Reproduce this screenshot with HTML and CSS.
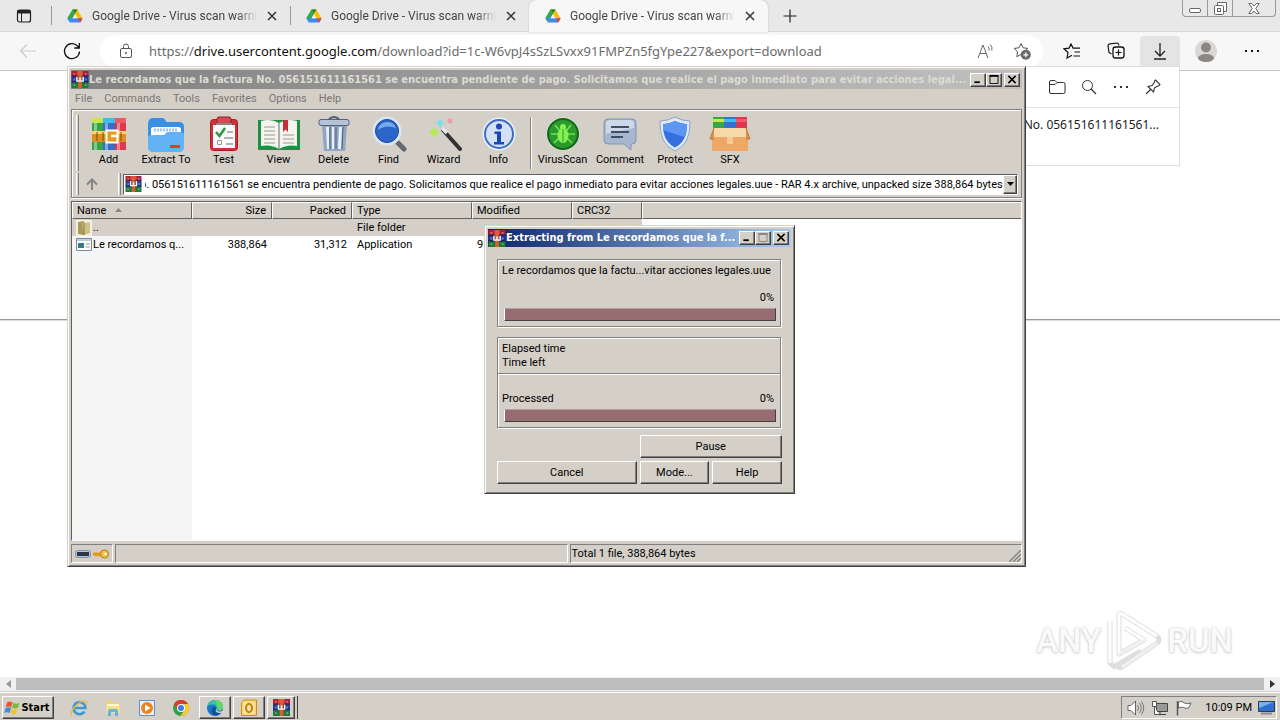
FILE: index.html
```html
<!DOCTYPE html>
<html lang="en">
<head>
<meta charset="utf-8">
<title>Google Drive - Virus scan warning</title>
<link rel="stylesheet" href="styles.css">
</head>
<body>
<svg class="defs" aria-hidden="true">
  <symbol id="drive" viewBox="0 0 16 16">
    <path d="M5.6 1.500h4.800L5.200 10.500.4 10.200z" fill="#34a853"/>
    <path d="M5.600 1.500h4.800l5.200 9h-4.900z" fill="#fbbc04"/>
    <path d="M5.600 1.500h4.800L8 5.600z" fill="#188038"/>
    <path d="M5.300 10.300h10.300l-2.400 4.200H2.800z" fill="#4285f4"/>
    <path d="M10.700 10.400h4.900l-2.400 4.100z" fill="#ea4335"/>
    <path d="M.4 10.200 5.600 1.500l2.400 4.100-4.600 8z" fill="#34a853"/>
    <path d="M.4 10.500h4.800L2.800 14.500z" fill="#4285f4"/>
    <path d="M8 6.400l2.300 3.900H5.700z" fill="#f4f4f4"/>
  </symbol>
  <symbol id="rar" viewBox="0 0 18 18">
    <path d="M0 0h6v6H0z" fill="#b5202c"/><path d="M6 0h6v6H6z" fill="#d8484a"/><path d="M12 0h6v6h-6z" fill="#a41e46"/>
    <path d="M0 6h18v6H0z" fill="#24389c"/><path d="M0 12h18v6H0z" fill="#1c7a3c"/>
    <path d="M0 5.500h18M0 11.500h18" stroke="#161a3c"/>
    <path d="M2 2h2v2H2zM2 8h2v2H2zM2 14h2v2H2zM14 2h2v2h-2zM14 8h2v2h-2zM14 14h2v2h-2z" fill="#fff" opacity=".35"/>
    <path d="M7 0h4v18H7z" fill="#d8602c"/>
    <path d="M5 6h1.500v4H5zM8.300 7h1.500v3H8.300zM11.600 6h1.500v4h-1.500zM5 10h8.100v1.500H5z" fill="#fff"/>
  </symbol>
  <symbol id="close" viewBox="0 0 10 10"><path d="M1 1l8 8M9 1l-8 8" stroke="#333" stroke-width="1.500"/></symbol>
  <symbol id="w-min" viewBox="0 0 10 10"><path d="M1 8h6" stroke="#000" stroke-width="2"/></symbol>
  <symbol id="w-max" viewBox="0 0 10 10"><path d="M.5 1v8.500h9V1" fill="none" stroke="currentColor"/><path d="M0 1h10" stroke="currentColor" stroke-width="2"/></symbol>
  <symbol id="w-close" viewBox="0 0 10 10"><path d="M1 1l8 8M9 1l-8 8" stroke="#000" stroke-width="1.700"/></symbol>
</svg>

<header class="browser">
  <div class="tabstrip">
    <button class="tabmenu" aria-label="Tab actions"><svg width="16" height="16" viewBox="0 0 16 16"><rect x="1.500" y="2" width="13" height="12" rx="2" fill="none" stroke="#222" stroke-width="1.200"/><path d="M1.500 4.500h13M1.500 3h13" stroke="#222" stroke-width="2"/><path d="M5.500 5v9" stroke="#222"/></svg></button>
    <div class="tab"><svg class="fav"><use href="#drive"/></svg><span class="tabtitle">Google Drive - Virus scan warni</span><button class="tabclose" aria-label="Close tab"><svg><use href="#close"/></svg></button></div>
    <div class="tab"><svg class="fav"><use href="#drive"/></svg><span class="tabtitle">Google Drive - Virus scan warni</span><button class="tabclose" aria-label="Close tab"><svg><use href="#close"/></svg></button></div>
    <div class="tab active"><svg class="fav"><use href="#drive"/></svg><span class="tabtitle">Google Drive - Virus scan warni</span><button class="tabclose" aria-label="Close tab"><svg><use href="#close"/></svg></button></div>
    <button class="newtab" aria-label="New tab"><svg width="14" height="14" viewBox="0 0 14 14"><path d="M7 .5v13M.5 7h13" stroke="#222" stroke-width="1.200"/></svg></button>
    <div class="wincontrols">
      <button aria-label="Minimize"><svg width="13" height="12" viewBox="0 0 13 12"><rect x=".5" y="6.500" width="11" height="4" rx="1.500" fill="#fff" stroke="#666"/></svg></button>
      <button aria-label="Restore"><svg width="13" height="13" viewBox="0 0 13 13"><path d="M3.500 3V.5h9v9H10" fill="#fff" stroke="#666"/><rect x=".5" y="3.500" width="9" height="9" rx="1" fill="#fff" stroke="#666"/><rect x="3.500" y="6.500" width="3" height="3" fill="none" stroke="#666"/></svg></button>
      <button class="wide" aria-label="Close"><svg width="12" height="11" viewBox="0 0 12 11"><path d="M.8.5h3L6 3 8.200.5h3L7.800 5.500l3.400 5h-3L6 8l-2.200 2.500h-3l3.400-5z" fill="#fff" stroke="#666"/></svg></button>
    </div>
  </div>
  <div class="toolbar">
    <button class="back" aria-label="Back"><svg width="18" height="16" viewBox="0 0 18 16"><path d="M17 8H1.500M8 1.500 1.500 8 8 14.500" fill="none" stroke="#ccc" stroke-width="1.200"/></svg></button>
    <button class="reload" aria-label="Refresh"><svg width="18" height="18" viewBox="0 0 18 18"><path d="M16.500 9.500A7.500 7.500 0 1 1 14.500 4L16 5.500M16.300 1v5h-5" fill="none" stroke="#111" stroke-width="1.300"/></svg></button>
    <div class="address">
      <svg width="14" height="16" viewBox="0 0 14 16"><rect x="1.500" y="5.500" width="11" height="9" rx="1.500" fill="none" stroke="#555"/><path d="M4.500 5.500V3.500a2.500 2.500 0 0 1 5 0v2" fill="none" stroke="#555"/><circle cx="7" cy="10" r="1" fill="#555"/></svg>
      <div class="url" role="textbox" contenteditable="true" aria-label="Address" spellcheck="false">https://<b>drive.usercontent.google.com</b>/download?id=1c-W6vpJ4sSzLSvxx91FMPZn5fgYpe227&amp;export=download</div>
      <button aria-label="Read aloud"><svg width="18" height="16" viewBox="0 0 18 16"><path d="M1 15 6 2l5 13M3 10.500h6M11 3.500q1.500 1.500 1 4M13 1.500q3 2.500 1.800 6" fill="none" stroke="#666"/></svg></button>
      <button aria-label="Add to favorites"><svg width="18" height="18" viewBox="0 0 18 18"><path d="M8 1.500l2 4.300 4.800.6-3.500 3.300L8 12.500 3.800 14.700 4.600 9.800 1.200 6.400 6 5.800z" fill="none" stroke="#555"/><circle cx="12.800" cy="12.800" r="5" fill="#666"/><path d="M12.800 10.300v5M10.300 12.800h5" stroke="#fff" stroke-width="1.200"/></svg></button>
    </div>
    <nav class="tools">
      <button aria-label="Favorites"><svg width="18" height="16" viewBox="0 0 18 16"><path d="M9 12.200 4 15l1-5.500L1 5.800l5-.7L8 1l2 4.100h7M11.500 9H17M10.500 13H17" fill="none" stroke="#111" stroke-width="1.200"/></svg></button>
      <button aria-label="Collections"><svg width="18" height="18" viewBox="0 0 18 18"><path d="M4.500 12 2 10.500 1 3.500Q1 2 3 1.800L10 1q1.500 0 2 2.500" fill="none" stroke="#111" stroke-width="1.200"/><rect x="6" y="5" width="11" height="11" rx="2.500" fill="none" stroke="#111" stroke-width="1.300"/><path d="M11.500 7.500v6M8.500 10.500h6" stroke="#111" stroke-width="1.200"/></svg></button>
      <button class="on" aria-label="Downloads"><svg width="14" height="17" viewBox="0 0 14 17"><path d="M7 0v13M2 8l5 5 5-5M1 16h12" fill="none" stroke="#222" stroke-width="1.300"/></svg></button>
      <button class="profile" aria-label="Profile"><svg width="24" height="24" viewBox="0 0 24 24"><circle cx="12" cy="12" r="11" fill="#dad7d4"/><circle cx="12" cy="8.500" r="5" fill="#8b8784"/><ellipse cx="12" cy="19" rx="8" ry="4" fill="#8b8784"/></svg></button>
      <button class="more" aria-label="Settings and more"><svg width="16" height="4" viewBox="0 0 16 4"><path d="M1 1h2v2H1zM7 1h2v2H7zM13 1h2v2h-2z" fill="#111"/></svg></button>
    </nav>
  </div>
</header>

<main class="page"><hr></main>

<div class="hscroll">
  <button aria-label="Scroll left"><svg width="5" height="8" viewBox="0 0 5 8"><path d="M5 0v8L0 4z" fill="#999"/></svg></button>
  <div class="thumb"></div>
  <button aria-label="Scroll right"><svg width="5" height="8" viewBox="0 0 5 8"><path d="M0 0v8l5-4z" fill="#333"/></svg></button>
</div>

<footer class="taskbar">
  <button class="raised start"><svg width="17" height="16" viewBox="0 0 17 16"><path d="M3 2.500q3-2 5.500 0L7.200 7.300q-2.500-1.600-5.500 0z" fill="#e8582a"/><path d="M9.300 2.800q3 1.800 6 0L14 7.700q-3 1.600-6 0z" fill="#7cb83c"/><path d="M1.500 8.200q3-2 5.500 0L5.700 13q-2.500-1.600-5.500 0z" fill="#3b8fd8"/><path d="M7.800 8.700q3 1.800 6 0l-1.300 4.900q-3 1.600-6 0z" fill="#f8c22c"/></svg>Start</button>
  <nav class="quick">
    <button aria-label="Internet Explorer"><svg width="18" height="18" viewBox="0 0 18 18"><path d="M14.500 12.500a6 6 0 1 1 1-3.500H4.500" fill="none" stroke="#3a9bdc" stroke-width="2.600"/><path d="M2 16.500Q-.5 14 5 7.500 12.500 0 16 2q1.500 1 0 4" fill="none" stroke="#e8b93a" stroke-width="1.300"/></svg></button>
    <button aria-label="Explorer"><svg width="18" height="18" viewBox="0 0 18 18"><path d="M2 2h5l1 2h8v10H2z" fill="#ecd372"/><path d="M3 5h12v3H3z" fill="#fff8cf"/><path d="M2 7h14v7H2z" fill="#f2df90"/><path d="M4 17v-5q0-2 2-2h6q2 0 2 2v5h-3v-4H7v4z" fill="#69b3dc"/></svg></button>
    <button aria-label="Media Player"><svg width="18" height="18" viewBox="0 0 18 18"><path d="M1.500 1.500h15v15h-15z" fill="#e8f1fa" stroke="#5a92c8"/><circle cx="9" cy="9" r="6" fill="#ef831c"/><path d="M7 5.500v7L12.500 9z" fill="#fff"/></svg></button>
    <button aria-label="Chrome"><svg width="18" height="18" viewBox="0 0 18 18"><circle cx="9" cy="9" r="8" fill="#34a048"/><path d="M2.100 5A8 8 0 0 1 15.900 5L9 5.500 5.500 11z" fill="#da3b2b"/><path d="M16 5a8 8 0 0 1-7.500 12L12.500 11 11 5z" fill="#f8ca30"/><circle cx="9" cy="9" r="4" fill="#fff"/><circle cx="9" cy="9" r="3" fill="#3d7de8"/></svg></button>
  </nav>
  <button class="raised task" aria-label="Edge"><svg width="18" height="18" viewBox="0 0 18 18"><circle cx="9" cy="9" r="8" fill="#1976c8"/><path d="M1.500 7Q3.500 1 9.500 1 16.500 1.500 17 7.500q0 4-4.500 4-3 0-2-2.500.5-3-3-3.500Q3.500 5 1.500 7z" fill="#3cc4a0"/><path d="M9 1q7 .5 8 6.500 0 4-4 4.200" fill="#66d868"/><path d="M10.500 9.500q-1 3.500 5 3-2.500 4.500-7 4-4-2-2.500-6.500Q8 6.500 10.500 9.500z" fill="#114f9e"/><path d="M10.500 9.300q-.6 2.900 3 3.200 2 0 3.500-1v2q-6 1.500-7.500-1.500z" fill="#d4d0c8"/></svg></button>
  <button class="raised task" aria-label="Outlook"><svg width="18" height="18" viewBox="0 0 18 18"><path d="M1.500 3.500 4 1h12.500v15.500h-15z" fill="#f7d778" stroke="#cf8f14"/><path d="M4 3.500h10v11H4z" fill="#fbe9ae"/><ellipse cx="9" cy="9" rx="3" ry="4.200" fill="none" stroke="#c98412" stroke-width="2.200"/></svg></button>
  <div class="stack"><button class="raised task" aria-label="WinRAR"><svg width="17" height="17"><use href="#rar"/></svg></button></div>
  <div class="tray">
    <svg width="18" height="16" viewBox="0 0 18 16"><path d="M1 5.500h3L8.500 1v14L4 10.500H1z" fill="#fff" stroke="#666"/><path d="M10.500 5q2 3 0 6M12.500 3q3.500 5 0 10M14.500 1.500q4.500 6.500 0 13" fill="none" stroke="#777"/></svg>
    <svg width="18" height="16" viewBox="0 0 18 16"><path d="M5.500 3.500h11v8h-11z" fill="#999" stroke="#444"/><path d="M9 12v2.500M6 14.500h9" stroke="#444"/><path d="M1.500 1.500h4v5h-4zM3.500 6.500v8h4" fill="#fff" stroke="#555"/></svg>
    <svg width="18" height="16" viewBox="0 0 18 16"><path d="M2.500 1v14.500" stroke="#555" stroke-width="1.500"/><path d="M3.500 2q4-1.500 6 1 3 1.500 6.500 0l-2.500 5q-3 1-5-.5-2-1-5 .5z" fill="#fff" stroke="#666"/></svg>
    <time>10:09 PM</time>
    <svg width="17" height="14" viewBox="0 0 17 14"><path d="M.5.5h16v10H.5z" fill="#2e6fd0" stroke="#244"/><path d="M1 1h15L1 7z" fill="#79b0ee"/><path d="M3 12.500h11" stroke="#889" stroke-width="2"/></svg>
  </div>
</footer>

<section class="downloads" aria-label="Downloads">
  <div class="dlhead">
    <button aria-label="Open folder"><svg width="17" height="16" viewBox="0 0 17 16"><path d="M.5 3Q.5 1.500 2 1.500h4l2 2h6.500q1.500 0 1.500 1.500v8q0 1.500-1.500 1.500H2Q.5 14.500.5 13zM.5 5.500H6l2-2" fill="none" stroke="#333"/></svg></button>
    <button aria-label="Search"><svg width="16" height="16" viewBox="0 0 16 16"><circle cx="6.500" cy="6.500" r="5" fill="none" stroke="#333"/><path d="M10 10l5 5" stroke="#333" stroke-width="1.200"/></svg></button>
    <button aria-label="More"><svg width="14" height="4" viewBox="0 0 14 4"><path d="M0 1h2v2H0zM6 1h2v2H6zM12 1h2v2h-2z" fill="#333"/></svg></button>
    <button aria-label="Pin"><svg width="16" height="16" viewBox="0 0 16 16"><path d="M10.500 1 15 5.500q-.5 1-2 1.500L9.500 8.800 8.500 13 3 7.500l4.200-1L9.500 3Q9.500 1.500 10.500 1zM5.500 10.500 1 15" fill="none" stroke="#333" stroke-width="1.100"/></svg></button>
  </div>
  <div class="dlitem">No. 056151611161561...</div>
</section>

<section class="win main" aria-label="WinRAR">
  <div class="titlebar">
    <svg width="18" height="17"><use href="#rar"/></svg>
    <h1>Le recordamos que la factura No. 056151611161561 se encuentra pendiente de pago. Solicitamos que realice el pago inmediato para evitar acciones legal...</h1>
    <button class="raised" aria-label="Minimize"><svg><use href="#w-min"/></svg></button><button class="raised" aria-label="Maximize"><svg><use href="#w-max"/></svg></button><button class="raised x" aria-label="Close"><svg><use href="#w-close"/></svg></button>
  </div>
  <nav class="menu"><button>File</button><button>Commands</button><button>Tools</button><button>Favorites</button><button>Options</button><button>Help</button></nav>
  <div class="rebar">
    <div class="tb">
      <i class="grip"></i>
      <button><svg viewBox="0 0 36 36"><path d="M1 2h11v32H1z" fill="#35a548"/><path d="M12 2h12v32H12z" fill="#3270c8"/><path d="M24 2h11v32H24z" fill="#dc3850"/><path d="M3 2h3v32H3zM14 2h3v32h-3zM26 2h3v32h-3z" fill="#fff" opacity=".4"/><path d="M1 2h11v5H1z" fill="#c7e848"/><path d="M12 2h12v5H12z" fill="#3bc0ea"/><path d="M24 2h11v5H24z" fill="#f0566c"/><path d="M1 15h34v11H1z" fill="#dd9021"/><path d="M1 15h34v3H1z" fill="#ffd36a"/><path d="M6 16v9M12 16v9M30 16v9" stroke="#7d4a0c"/><rect x="15.500" y="14.500" width="11" height="12" fill="#e89a22" stroke="#fff" stroke-width="2"/><path d="M20 20h8" stroke="#fff" stroke-width="2.500"/></svg>Add</button>
      <button class="w60"><svg viewBox="0 0 36 36"><path d="M0 8Q0 2 5 2h9q3 0 4 4h13q5 0 5 5v10H0z" fill="#3a8fe4"/><path d="M3 13q0-2 3-2h24q3 0 3 2v10H3z" fill="#fff"/><path d="M6 14h24" stroke="#9cc8f2" stroke-width="3" stroke-dasharray="2 1"/><path d="M0 20q3-1 8-1h8l3-3h14q3 0 3 4v11q0 5-5 5H5q-5 0-5-5z" fill="#62b2f6"/><path d="M22 29h10v3H22z" fill="#e23a2e"/></svg>Extract To</button>
      <button><svg viewBox="0 0 36 36"><rect x="4.500" y="3.500" width="27" height="31" rx="3" fill="#cf2f38" stroke="#a32028"/><path d="M7 9h22v23H7z" fill="#fafafa"/><path d="M11 3q0-2 2-2h10q2 0 2 2v5H11z" fill="#d84850" stroke="#8d2028"/><path d="M10 8h16" stroke="#888" stroke-width="2"/><path d="M10 16l3.500 4L19 12" fill="none" stroke="#2f9444" stroke-width="2.500"/><path d="M21 16h6M18 22h9M20 28h7" stroke="#999" stroke-width="1.500"/><path d="M11.500 24.500h4v4h-4z" fill="none" stroke="#999"/></svg>Test</button>
      <button><svg class="big" viewBox="0 0 42 36"><path d="M0 4h42v30H0z" fill="#1f8f44"/><path d="M3 5q10-3 18 2 8-5 18-2v25q-10-2-18 3-8-5-18-3z" fill="#f4f4ec"/><path d="M21 7v26" stroke="#999" stroke-width="1.500"/><path d="M6 11h11M6 15h11M6 19h11M6 23h11M6 27h11M25 19h11M25 23h11M25 27h11" stroke="#b8b8b0" stroke-width="1.300"/><path d="M25 4h5v12l-2.500-2.500L25 16z" fill="#c4303a"/></svg>View</button>
      <button><svg viewBox="0 0 36 36"><path d="M13 3q5-4 10 0" fill="none" stroke="#555e70" stroke-width="2"/><path d="M6 10h25l-2 25H8z" fill="#91a6c0"/><path d="M10 11l1 22h2V11zM16 11v22h2V11zM23 11l-1 22h3l1-22z" fill="#e8eff8"/><path d="M14 11v22M20 11v22M27 11l-1 22" stroke="#4c6080"/><rect x="3" y="3.500" width="30" height="6" rx="2" fill="#b7c3d4" stroke="#52607a"/></svg>Delete</button>
      <button><svg viewBox="0 0 36 36"><path d="M24 24l9 9" stroke="#63676f" stroke-width="5" stroke-linecap="round"/><path d="M23 23l3 3" stroke="#ddd" stroke-width="5"/><circle cx="16" cy="15" r="13" fill="#2a65c8" stroke="#dce6f0" stroke-width="3"/><circle cx="16" cy="15" r="11.500" fill="none" stroke="#1c479a"/><path d="M7 14q1-8 10-8 6 0 8 6-10-4-18 2z" fill="#76a9ee"/></svg>Find</button>
      <button><svg viewBox="0 0 36 36"><path d="M17 14l17 19" stroke="#333" stroke-width="4" stroke-linecap="round"/><path d="M16 12l5 5" stroke="#e8e8e8" stroke-width="3.500"/><path d="M14 2l1 4 4 1-4 1-1 5-1-5-4-1 4-1z" fill="#5fd9e2"/><circle cx="14" cy="7" r="3" fill="#7fe4ea" opacity=".7"/><path d="M8 11l1.500 4 4 1.500-4 1.500L8 22l-1.500-4-4-1.500 4-1.500z" fill="#a8e848"/><circle cx="8" cy="16.500" r="4" fill="#b5ec58" opacity=".7"/><circle cx="24" cy="5" r="2.500" fill="#f29aae"/></svg>Wizard</button>
      <button><svg viewBox="0 0 36 36"><circle cx="18" cy="18" r="16.500" fill="#e9f0fa"/><circle cx="18" cy="18" r="14" fill="#d4e1f4" stroke="#3e6cc4" stroke-width="2"/><circle cx="18" cy="10.500" r="3" fill="#1c47b8"/><path d="M13.500 15.500H20V26h3v2.500H13V26h3v-8h-2.500z" fill="#1c47b8"/></svg>Info</button>
      <i class="sep"></i>
      <button><svg viewBox="0 0 36 36"><circle cx="18" cy="18" r="16.500" fill="#dfead8"/><circle cx="18" cy="18" r="15" fill="#2a9a2c" stroke="#14651c" stroke-width="2"/><path d="M10 9l5 6M26 9l-5 6M6 18h24M9 27l6-6M27 27l-6-6" stroke="#75e050" stroke-width="1.600"/><ellipse cx="18" cy="19.500" rx="5.500" ry="7.500" fill="#86f052"/><circle cx="18" cy="11" r="3" fill="#86f052"/><path d="M18 13v13" stroke="#2a9a2c"/></svg>VirusScan</button>
      <button class="w60"><svg viewBox="0 0 36 36"><path d="M6 3h24q4 0 4 4v17q0 4-4 4h-1v6l-7-6H6q-4 0-4-4V7q0-4 4-4z" fill="#a6b8d0" stroke="#8094b0"/><path d="M4 6q1-2 4-2h20q4 0 4 3v5L4 18z" fill="#ccd8e8"/><path d="M9 11h18M9 16h18M9 21h12" stroke="#3f4f68" stroke-width="1.800"/></svg>Comment</button>
      <button class="w50"><svg viewBox="0 0 36 36"><path d="M18 1q7 4 15 4 1 23-15 30Q2 28 3 5q8 0 15-4z" fill="#dfe8f4" stroke="#8aa4cc"/><path d="M18 5q6 3 12 3.200Q30.500 25 18 31.500 5.500 25 6 8.200 12 8 18 5z" fill="#3470e0"/><path d="M18 5q6 3 12 3.200Q30.500 15 27 21L6 14V8.200Q12 8 18 5z" fill="#5c95f2"/></svg>Protect</button>
      <button class="w60"><svg class="big" viewBox="0 0 42 36"><path d="M4 1h11v14H4z" fill="#3aa548"/><path d="M15 1h12v14H15z" fill="#3672cc"/><path d="M27 1h11v14H27z" fill="#dc3850"/><path d="M4 3h11v3H4z" fill="#c7e848"/><path d="M15 3h12v3H15z" fill="#3bc0ea"/><path d="M27 3h11v3H27z" fill="#f0566c"/><path d="M5 12h32l4 10H1z" fill="#f6d9a8"/><path d="M3 21h36v14H3z" fill="#eda868"/><path d="M5 12 1 23h4M37 12l4 11h-4" fill="#d98f52" stroke="#c07a3c"/><path d="M18 21h6v7h-6z" fill="#f6c892"/></svg>SFX</button>
    </div>
    <div class="pathrow">
      <i class="grip"></i>
      <button class="up" aria-label="Up one level"><svg width="12" height="12" viewBox="0 0 12 12"><path d="M6 12V2M1 6.500l5-5 5 5" fill="none" stroke="#858585" stroke-width="2"/></svg></button>
      <i class="grip"></i>
      <div class="combo">
        <svg width="17" height="16"><use href="#rar"/></svg>
        <input type="text" aria-label="Archive path" value="o. 056151611161561 se encuentra pendiente de pago. Solicitamos que realice el pago inmediato para evitar acciones legales.uue - RAR 4.x archive, unpacked size 388,864 bytes">
        <button class="raised" aria-label="Show paths"><svg width="7" height="4" viewBox="0 0 7 4"><path d="M0 0h7L3.500 4z"/></svg></button>
      </div>
    </div>
  </div>
  <div class="list">
    <table>
      <colgroup><col class="c120"><col class="c80"><col class="c80"><col class="c120"><col class="c100"><col class="c70"><col></colgroup>
      <thead><tr><th>Name<svg class="sort" width="7" height="4" viewBox="0 0 7 4"><path d="M0 4h7L3.500 0z" fill="#888"/></svg></th><th class="num">Size</th><th class="num">Packed</th><th>Type</th><th>Modified</th><th>CRC32</th><th></th></tr></thead>
      <tbody>
        <tr class="sel"><td class="name"><svg width="16" height="16" viewBox="0 0 16 16"><path d="M0 0h16v16H0z" fill="#f4f1e4"/><path d="M2 2l6-1v14l-6-1z" fill="#a89a58"/><path d="M6 3l8-1v11l-6 2z" fill="#cfc388"/><path d="M8 3v12" stroke="#87793c"/></svg><span>..</span></td><td></td><td></td><td>File folder</td><td></td><td></td><td></td></tr>
        <tr><td class="name"><svg width="16" height="14" viewBox="0 0 16 14"><path d="M.5.5h15v12H.5z" fill="#fff" stroke="#7a8a98"/><path d="M1 1h14v2H1z" fill="#b8d0e4"/><path d="M2 5h6v5H2z" fill="#3c7a80"/><path d="M9.500 6H14M9.500 9H14" stroke="#99a"/></svg><span>Le recordamos q...</span></td><td class="num">388,864</td><td class="num">31,312</td><td>Application</td><td>9</td><td></td><td></td></tr>
      </tbody>
    </table>
  </div>
  <div class="status">
    <div class="pane icons"><svg width="16" height="8" viewBox="0 0 16 8"><rect x=".5" y=".5" width="15" height="7" rx="2" fill="#b8c4d4" stroke="#8492a8"/><path d="M2 2h12v4H2z" fill="#2c3548"/></svg><svg width="17" height="10" viewBox="0 0 17 10"><path d="M0 3.500h10v3H7L6 8 4.500 6.500 3 8 2 6.500H0z" fill="#e09a20"/><circle cx="11.500" cy="5" r="4" fill="#f4c440" stroke="#b87810"/><circle cx="12.500" cy="5" r="1.300" fill="#fff"/></svg></div>
    <div class="pane"></div>
    <div class="pane">Total 1 file, 388,864 bytes<svg class="size" width="12" height="12" viewBox="0 0 12 12"><path d="M0 12 12 0M4 12l8-8M8 12l4-4" stroke="#808080" stroke-width="1.500"/></svg></div>
  </div>
</section>

<section class="win dialog" role="dialog" aria-label="Extracting">
  <div class="titlebar">
    <svg width="18" height="17"><use href="#rar"/></svg>
    <h2>Extracting from Le recordamos que la f...</h2>
    <button class="raised" aria-label="Minimize"><svg><use href="#w-min"/></svg></button><button class="raised off" aria-label="Maximize" disabled><svg><use href="#w-max"/></svg></button><button class="raised x" aria-label="Close"><svg><use href="#w-close"/></svg></button>
  </div>
  <div class="body">
    <div class="group">
      <p>Le recordamos que la factu...vitar acciones legales.uue</p>
      <p class="pct">0%</p>
      <div class="bar" role="progressbar" aria-valuenow="0" aria-label="Current file"></div>
    </div>
    <div class="group">
      <p>Elapsed time</p>
      <p>Time left</p>
      <div class="rule"></div>
      <p class="pair"><span>Processed</span><span>0%</span></p>
      <div class="bar" role="progressbar" aria-valuenow="0" aria-label="Processed"></div>
    </div>
    <div class="actions"><button class="raised pause">Pause</button><button class="raised cancel">Cancel</button><button class="raised">Mode...</button><button class="raised">Help</button></div>
  </div>
</section>

<div class="watermark">ANY<svg width="58" height="62" viewBox="0 0 58 62"><g fill="none" stroke-linejoin="round"><path d="M14 20V5q0-3 3-1l35 22q4 4 0 7L17 57q-4 2-5-2l24-14M5 11v42l6 5M14 14v30l25-14-19-12" stroke="#dedede" stroke-width="5"/><path d="M14 20V5q0-3 3-1l35 22M5 11v42M14 14v30l25-14-19-12" stroke="#fff" stroke-width="3"/><path d="M52 33 17 57M14 44l25-14" stroke="#f0f0f0" stroke-width="3"/></g></svg>RUN</div>
</body>
</html>
```
FILE: styles.css
```css
* { box-sizing: border-box; }
body {
  margin: 0; height: 100vh; display: flex; flex-direction: column; overflow: hidden;
  position: relative; background: #fff; color: #000;
  font: 11px/14px Roboto, "DejaVu Sans Condensed", sans-serif;
}
button { border: 0; background: none; padding: 0; margin: 0; font: inherit; color: inherit; display: flex; align-items: center; justify-content: center; }
svg { display: block; flex: none; }
p, h1, h2 { margin: 0; font-size: inherit; }
.defs { position: absolute; width: 0; height: 0; }

/* browser */
.browser { flex: none; }
.tabstrip { display: flex; height: 32px; background: #e8e8e8; border-bottom: 1px solid #d8d8d8; }
.tabmenu { width: 51px; padding-right: 3px; }
.tab { display: flex; align-items: center; width: 239px; padding: 0 13px 0 15px; border-left: 1px solid #999; margin: 6px 0; color: #444; font-size: 12px; }
.tab.active { margin: 0 0 -1px; border: 0; background: #f7f7f7; border-radius: 8px 8px 0 0; padding-left: 16px; box-shadow: 0 0 2px #bbb; }
.fav { width: 16px; height: 16px; margin-right: 9px; }
.tabtitle { flex: 1; white-space: nowrap; line-height: 20px; -webkit-mask: linear-gradient(90deg, #000 88%, transparent); mask: linear-gradient(90deg, #000 88%, transparent); }
.tabclose { margin-left: 10px; }
.tabclose svg { width: 10px; height: 10px; }
.newtab { width: 44px; }
.wincontrols { display: flex; height: 17px; margin: 0 4px 0 auto; border: 1px solid #999; border-top: 0; border-radius: 0 0 4px 4px; }
.wincontrols button { width: 25px; border-right: 1px solid #999; }
.wincontrols .wide { width: 42px; border: 0; }
.toolbar { display: flex; align-items: center; height: 39px; background: #f7f7f7; border-bottom: 1px solid #c8c8c8; }
.back { width: 56px; }
.reload { width: 32px; }
.address { flex: 1; display: flex; align-items: center; height: 32px; margin-left: 12px; padding: 0 12px 0 19px; border-radius: 16px; background: #fff; }
.url { flex: 1; margin-left: 16px; font: 13px/20px "Noto Sans", sans-serif; color: #6b6b6b; white-space: nowrap; outline: 0; }
.url b { font-weight: 400; color: #111; }
.address button { margin-left: 18px; }
.tools { display: flex; align-items: center; padding: 0 8px 0 7px; }
.tools button { width: 44px; height: 30px; }
.tools .on { width: 40px; background: #e4e4e4; border-radius: 4px 4px 0 0; margin-left: 2px; }
.tools .profile { width: 52px; }
.tools .more { width: 40px; }
.page { flex: 1; }
.page hr { margin: 248px 0 0; border: 0; border-top: 1px solid #999; border-bottom: 1px solid #ddd; }
.hscroll { display: flex; height: 15px; padding: 1px 0 2px; background: #f0f0f0; }
.hscroll button { width: 16px; }
.thumb { flex: 1; background: #bdbdbd; }

/* downloads panel */
.downloads { position: absolute; top: 66px; right: 100px; width: 360px; height: 100px; background: #fff; border: 1px solid #ddd; font-family: "Noto Sans", sans-serif; }
.dlhead { display: flex; justify-content: flex-end; padding-right: 10px; height: 41px; border-bottom: 1px solid #e2e2e2; }
.dlhead button { width: 32px; }
.dlitem { padding: 8px 20px; text-align: right; font-size: 12px; line-height: 18px; color: #222; }

/* taskbar */
.taskbar { flex: none; display: flex; height: 28px; padding: 3px 3px 1px 2px; background: #d4d0c8; border-top: 1px solid #fff; box-shadow: 0 -1px #d4d0c8; }
.raised { background: #d4d0c8; border: 1px solid; border-color: #fff #404040 #404040 #fff; box-shadow: inset -1px -1px #808080; }
.start { width: 52px; padding-right: 2px; font: 700 11px/14px "DejaVu Sans Condensed", sans-serif; }
.quick { display: flex; width: 145px; padding-left: 8px; }
.quick button { width: 34px; }
.task { width: 32px; margin-right: 2px; }
.stack { border-right: 1px solid #404040; }
.stack .task { height: 100%; width: 28px; }
.tray { display: flex; align-items: center; gap: 6px; margin-left: auto; padding: 0 1px 0 5px; border: 1px solid; border-color: #808080 #fff #fff #808080; }
.tray time { margin: 0 0 0 6px; }

/* windows */
.win { position: absolute; display: flex; flex-direction: column; padding: 3px; background: #d4d0c8; border: 1px solid; border-color: #d4d0c8 #404040 #404040 #d4d0c8; box-shadow: inset 1px 1px #fff, inset -1px -1px #808080; }
.win.main { left: 67px; right: 254px; top: 66px; bottom: 153px; }
.titlebar { flex: none; display: flex; align-items: center; height: 19px; padding-right: 2px; color: #dedad2; background: linear-gradient(90deg, #808080, #c0c0c0); }
.titlebar h1, .titlebar h2 { flex: 1; min-width: 0; white-space: nowrap; font: 700 11px/14px "DejaVu Sans Condensed", sans-serif; }
.titlebar button { width: 16px; height: 14px; padding-bottom: 1px; color: #000; }
.titlebar button svg { width: 10px; height: 9px; }
.titlebar .x { margin-left: 2px; }
.titlebar .off { color: #808080; }
.menu { flex: none; display: flex; height: 20px; padding-left: 4px; gap: 12px; color: #7a7672; }
.rebar { flex: none; padding: 3px 3px 1px 4px; margin-bottom: 3px; border: 1px solid #808080; box-shadow: inset 1px 1px #fff, 0 1px #fff; }
.tb { display: flex; height: 59px; align-items: center; }
.grip { flex: none; width: 3px; height: 56px; margin-right: 2px; border-left: 1px solid #fff; border-right: 1px solid #808080; }
.tb button { width: 55px; height: 54px; flex-direction: column; justify-content: flex-start; white-space: nowrap; gap: 1px; }
.tb button svg { width: 36px; height: 36px; }
.tb button .big { width: 42px; }
.tb .w60 { width: 60px; }
.tb .w50 { width: 50px; }
.sep { width: 2px; height: 52px; margin: 0 3px 0 4px; border-left: 1px solid #808080; border-right: 1px solid #fff; }
.pathrow { display: flex; align-items: center; height: 24px; }
.pathrow .grip { height: 22px; }
.up { width: 22px; margin-right: 15px; }
.combo { flex: 1; display: flex; align-items: center; height: 21px; background: #fff; border: 1px solid; border-color: #606060 #fff #fff #606060; padding-left: 1px; }
.combo input { flex: 1; min-width: 0; height: 18px; border: 0; outline: 0; padding: 0; margin-left: 3px; font: inherit; text-indent: -5px; background: none; }
.combo button { width: 14px; height: 100%; }
.list { flex: 1; border: 1px solid; border-color: #606060 #fff #fff #606060; background: linear-gradient(#f5f5f5, #f5f5f5) 0 0 / 120px 100% no-repeat #fff; }
table { width: 100%; table-layout: fixed; border-collapse: separate; border-spacing: 0; }
.c120 { width: 120px; } .c100 { width: 100px; } .c80 { width: 80px; } .c70 { width: 70px; }
th, td { height: 17px; padding: 0 5px; text-align: left; font-weight: 400; white-space: nowrap; line-height: 15px; }
th { padding: 0 5px 0 4px; background: #d4d0c8; border: 1px solid; border-color: #fff #606060 #606060 #fff; }
th:last-child { border-right: 0; }
.sort { display: inline-block; margin: 0 0 2px 9px; }
.num { text-align: right; }
.sel td:not(:last-child) { background: #d4d0c8; }
td.name { display: flex; align-items: center; gap: 1px; padding: 0 0 0 4px; }
.status { flex: none; display: flex; gap: 2px; padding-top: 3px; height: 22px; }
.pane { position: relative; flex: 1; display: flex; align-items: center; border: 1px solid; border-color: #808080 #fff #fff #808080; padding-left: 1px; }
.pane.icons { flex: none; width: 42px; gap: 2px; padding-left: 3px; }
.size { position: absolute; right: 0; bottom: 0; }

/* progress dialog */
.dialog { left: 484px; top: 225px; width: 311px; }
.dialog .titlebar { height: 18px; color: #fff; background: linear-gradient(90deg, #0a246a, #a6caf0); }
.dialog .body { padding: 12px 10px 6px 9px; }
.group { border: 1px solid #808080; box-shadow: 1px 1px #fff, inset 1px 1px #fff; margin-bottom: 10px; padding: 4px 4px 5px; }
.pct { text-align: right; margin-top: 13px; padding-right: 2px; }
.bar { height: 13px; margin: 3px 0 0 2px; background: #976c70; border: 1px solid; border-color: #b89c9c #404040 #404040 #fff; }
.rule { height: 2px; margin: 3px -4px 17px; background: #fff; border-top: 1px solid #808080; }
.pair { display: flex; justify-content: space-between; padding-right: 2px; }
.actions { display: grid; grid-template-columns: 2fr 1fr 1fr; gap: 3px; margin: -3px -1px 0 0; }
.actions button { height: 23px; }
.pause { grid-column: 2 / 4; }
.cancel { grid-column: 1; }

.watermark { position: absolute; right: 47px; top: 610px; display: flex; align-items: center; gap: 4px; font: 500 33px/62px Roboto, "Liberation Sans", sans-serif; color: #fafafa; text-shadow: 0 0 2px #ccc, 0 1px 3px #ccc; }
```
